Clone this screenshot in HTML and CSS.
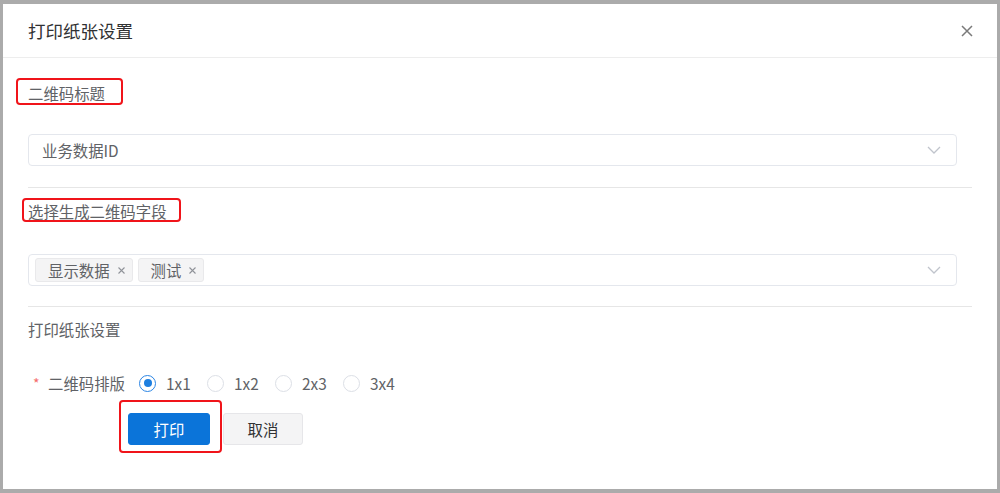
FILE: index.html
```html
<!DOCTYPE html>
<html lang="zh-CN">
<head>
<meta charset="utf-8">
<title>打印纸张设置</title>
<link rel="stylesheet" href="styles.css">
</head>
<body>
<div class="dialog">
  <div class="header">
    <span class="title">打印纸张设置</span>
    <svg class="close" width="12" height="12" viewBox="0 0 12 12"><path d="M1 1L11 11M11 1L1 11" stroke="#7a7a7a" stroke-width="1.5" fill="none"/></svg>
  </div>
  <div class="body">
    <div class="label-row first">
      <span class="label">二维码标题<span class="mark mark-1"></span></span>
    </div>
    <div class="select select-1">
      <span class="select-text">业务数据ID</span>
      <svg class="chevron" width="14" height="8" viewBox="0 0 14 8"><path d="M1 1L7 7L13 1" stroke="#c0c4cc" stroke-width="1.3" fill="none"/></svg>
    </div>
    <div class="divider d1"></div>
    <div class="label-row second">
      <span class="label">选择生成二维码字段<span class="mark mark-2"></span></span>
    </div>
    <div class="select select-2">
      <div class="tags">
        <span class="tag">显示数据<svg class="tag-x" width="7" height="7" viewBox="0 0 7 7"><path d="M0.5 0.5L6.5 6.5M6.5 0.5L0.5 6.5" stroke="#909399" stroke-width="1.1" fill="none"/></svg></span>
        <span class="tag">测试<svg class="tag-x" width="7" height="7" viewBox="0 0 7 7"><path d="M0.5 0.5L6.5 6.5M6.5 0.5L0.5 6.5" stroke="#909399" stroke-width="1.1" fill="none"/></svg></span>
      </div>
      <svg class="chevron" width="14" height="8" viewBox="0 0 14 8"><path d="M1 1L7 7L13 1" stroke="#c0c4cc" stroke-width="1.3" fill="none"/></svg>
    </div>
    <div class="divider d2"></div>
    <div class="label-row third">
      <span class="label">打印纸张设置</span>
    </div>
    <div class="form-item">
      <span class="star">*</span>
      <span class="form-label">二维码排版</span>
      <div class="radios">
        <span class="radio checked"><span class="circle"></span><span class="radio-text">1x1</span></span>
        <span class="radio"><span class="circle"></span><span class="radio-text">1x2</span></span>
        <span class="radio"><span class="circle"></span><span class="radio-text">2x3</span></span>
        <span class="radio"><span class="circle"></span><span class="radio-text">3x4</span></span>
      </div>
    </div>
    <div class="buttons">
      <button class="btn btn-primary">打印<span class="mark mark-3"></span></button>
      <button class="btn btn-default">取消</button>
    </div>
  </div>
</div>
</body>
</html>
```
FILE: styles.css
```css
html, body {
  margin: 0;
  padding: 0;
}
body {
  background: #ababab;
  font-family: "Noto Sans CJK SC", "Noto Sans", sans-serif;
  height: 493px;
  overflow: hidden;
}
.dialog {
  margin: 4px 3px 0 3px;
  width: 994px;
  height: 485px;
  background: #fff;
  display: flex;
  flex-direction: column;
}
.header {
  height: 53px;
  border-bottom: 1px solid #ededed;
  display: flex;
  align-items: center;
  justify-content: space-between;
  padding: 0 24px 0 25px;
}
.title {
  font-size: 17.5px;
  color: #303133;
  line-height: 24px;
}
.close {
  display: block;
}
.body {
  padding: 0 25px;
}
.label-row {
  height: 20px;
  line-height: 20px;
}
.label-row.first { margin-top: 25px; }
.label-row.second { margin-top: 13px; }
.label-row.third { margin-top: 12px; }
.label {
  position: relative;
  display: inline-block;
  font-size: 15.4px;
  color: #606266;
  line-height: 20px;
}
.mark {
  position: absolute;
  box-sizing: border-box;
  border: 2px solid #f0141a;
  border-radius: 4px;
  pointer-events: none;
}
.mark-1 { left: -12px; top: -5px; width: 107px; height: 27px; }
.mark-2 { left: -6px; top: -3px; width: 159px; height: 24px; }
.mark-3 { left: -10px; top: -14px; width: 103px; height: 53px; }
.select {
  box-sizing: border-box;
  height: 32px;
  margin-right: 15px;
  border: 1px solid #e4e7ed;
  border-radius: 4px;
  display: flex;
  align-items: center;
  justify-content: space-between;
  padding: 0 15px 0 13px;
}
.select-1 { margin-top: 31px; }
.select-2 { margin-top: 33px; padding-left: 6px; }
.select-text {
  font-size: 15.4px;
  color: #606266;
  line-height: 20px;
}
.chevron { display: block; }
.divider {
  height: 1px;
  background: #e6e6e6;
}
.d1 { margin-top: 21px; }
.d2 { margin-top: 20px; }
.tags {
  display: flex;
  gap: 5px;
}
.tag {
  box-sizing: border-box;
  height: 24px;
  display: inline-flex;
  align-items: center;
  gap: 8px;
  padding: 0 7px 0 12px;
  background: #f4f4f5;
  border: 1px solid #e9e9eb;
  border-radius: 3px;
  font-size: 15.4px;
  color: #606266;
  line-height: 20px;
}
.tag-x { display: block; }
.form-item {
  margin-top: 34px;
  height: 20px;
  display: flex;
  align-items: center;
}
.star {
  box-sizing: border-box;
  width: 20px;
  padding-left: 5px;
  color: #f56c6c;
  font-size: 14px;
  line-height: 20px;
}
.form-label {
  width: 91px;
  font-size: 15.4px;
  color: #606266;
  line-height: 20px;
}
.radios {
  display: flex;
}
.radio {
  width: 68px;
  display: flex;
  align-items: center;
}
.circle {
  box-sizing: border-box;
  width: 17px;
  height: 17px;
  border: 1px solid #dcdfe6;
  border-radius: 50%;
  margin-right: 10px;
  display: flex;
  align-items: center;
  justify-content: center;
  background: #fff;
}
.radio.checked .circle {
  border-color: #2b85e4;
}
.radio.checked .circle::after {
  content: "";
  width: 8px;
  height: 8px;
  border-radius: 50%;
  background: #1d7fe0;
}
.radio-text {
  font-size: 15.4px;
  color: #606266;
  line-height: 20px;
}
.buttons {
  margin-top: 20px;
  padding-left: 100px;
  display: flex;
  gap: 13px;
}
.btn {
  box-sizing: border-box;
  height: 32px;
  border-radius: 3px;
  font-family: "Noto Sans CJK SC", "Noto Sans", sans-serif;
  font-size: 15.4px;
  line-height: 20px;
  padding: 0;
  cursor: pointer;
}
.btn-primary {
  position: relative;
  width: 82px;
  background: #0b74d9;
  border: 1px solid #0b74d9;
  color: #fff;
}
.btn-default {
  width: 80px;
  background: #f4f4f5;
  border: 1px solid #e6e6e9;
  color: #303133;
}
```
